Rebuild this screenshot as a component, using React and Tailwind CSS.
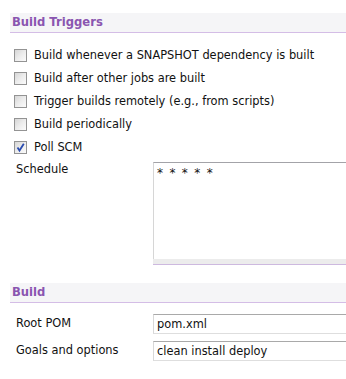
import React from "react";

const Box = ({ checked }) => (
  <span className="relative w-[13px] h-[13px] shrink-0 border border-[#939393] bg-gradient-to-br from-[#d6d6d6] via-[#ececec] to-[#fbfbfb]">
    {checked && (
      <svg viewBox="0 0 11 11" className="absolute inset-0 w-[11px] h-[11px]">
        <path d="M2.5 5.5 L4.5 8.5 L8.8 1.8" fill="none" stroke="#2a4cb0" strokeWidth="1.8" />
      </svg>
    )}
  </span>
);

const Header = ({ title }) => (
  <div className="h-[20px] bg-[#f5f5f7] border-b border-[#d4bde6] pl-[2px] text-[11.6px] leading-[19px] font-bold text-[#8a55b0]">
    {title}
  </div>
);

const triggers = [
  { label: "Build whenever a SNAPSHOT dependency is built", checked: false },
  { label: "Build after other jobs are built", checked: false },
  { label: "Trigger builds remotely (e.g., from scripts)", checked: false },
  { label: "Build periodically", checked: false },
  { label: "Poll SCM", checked: true },
];

const Field = ({ label, value }) => (
  <div className="flex items-center h-[20px]">
    <div className="w-[143px] pl-[6px]">{label}</div>
    <div className="flex-1 h-[20px] border-t border-[#a9a9a9] border-l border-l-[#d8d8d8] border-b border-b-[#dedede] pl-[3px] leading-[18px]">
      {value}
    </div>
  </div>
);

export default function App() {
  return (
    <div className="w-[346px] h-[379px] overflow-hidden bg-white text-[11.4px] text-[#111] font-['DejaVu_Sans',sans-serif]">
      <div className="ml-[10px] mt-[13px] w-[360px]">
        <Header title="Build Triggers" />
        <div className="mt-[11px]">
          {triggers.map((t, i) => (
            <div key={i} className="h-[23px] flex items-center pl-[4px] gap-[7px]">
              <Box checked={t.checked} />
              <span>{t.label}</span>
            </div>
          ))}
        </div>
        <div className="flex mt-[3px]">
          <div className="w-[143px] pl-[6px] leading-[14px]">Schedule</div>
          <div className="flex-1">
            <div className="h-[97px] border-t border-[#a3a3a8] border-l border-l-[#d6d6d6] pl-[3px] pt-[2px] text-[12px] leading-[16px] tracking-[1.3px]">
              * * * * *
            </div>
            <div className="h-[6px] bg-[#ececec] border-b border-[#cdb9df]" />
          </div>
        </div>
        <div className="mt-[18px]">
          <Header title="Build" />
        </div>
        <div className="mt-[11px] flex flex-col gap-[7px]">
          <Field label="Root POM" value="pom.xml" />
          <Field label="Goals and options" value="clean install deploy" />
        </div>
      </div>
    </div>
  );
}
